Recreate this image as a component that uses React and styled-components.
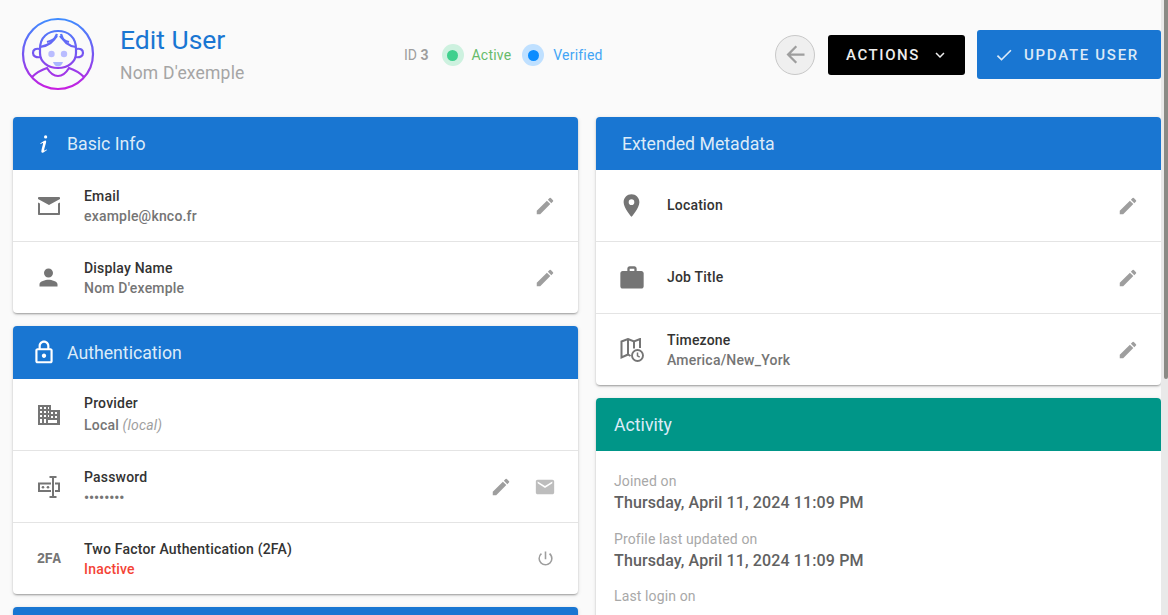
import React from "react";
import styled, { createGlobalStyle } from "styled-components";
import { MdEdit, MdEmail, MdPerson, MdPlace, MdWork, MdPowerSettingsNew, MdCheck, MdKeyboardArrowDown, MdArrowBack, MdOutlineLock } from "react-icons/md";

const Global = createGlobalStyle`
  html, body { overflow: hidden; background: #fafafa; }
  body { margin: 0; font-family: Roboto, "Liberation Sans", sans-serif; color: #333; }
`;
const Page = styled.div`height: 615px; overflow: hidden; padding: 0 0 0 13px;`;
const ScrollTrack = styled.div`position: fixed; top: 0; right: 0; bottom: 0; width: 7px; background: #e9e9e9;`;
const ScrollThumb = styled.div`position: absolute; top: 0; right: 0; width: 4px; height: 379px; background: #8a8a85; border-radius: 0 0 2px 2px;`;
const Header = styled.header`height: 117px; display: flex; align-items: flex-start; box-sizing: border-box;`;
const Identity = styled.div`display: flex; align-items: center; gap: 25px; margin: 17px 0 0 8px; width: 383px; flex: none;`;
const Titles = styled.div`display: flex; flex-direction: column; gap: 8px;`;
const Title = styled.h1`margin: 0; font-size: 26.5px; line-height: 30px; font-weight: 400; color: #1976d2;`;
const Subtitle = styled.div`font-size: 17.5px; line-height: 20px; letter-spacing: .2px; color: #a5a5a5;`;
const Statuses = styled.div`display: flex; align-items: center; margin: 44px 0 0 0; height: 22px; width: 371px; flex: none;`;
const IdText = styled.span`font-size: 14px; color: #9e9e9e; margin-right: 13px; b { font-weight: 700; }`;
const Dot = styled.span`width: 22px; height: 22px; border-radius: 50%; background: ${p => p.$ring}; display: flex; align-items: center; justify-content: center; margin-right: ${p => p.$gap || 8}px;
  &::after { content: ""; width: 11px; height: 11px; border-radius: 50%; background: ${p => p.$core}; }`;
const StatusText = styled.span`font-size: 14px; letter-spacing: .2px; color: ${p => p.$color}; margin-right: ${p => p.$gap || 0}px;`;
const Actions = styled.div`display: flex; align-items: center; margin-top: 30px; height: 49px;`;
const BackButton = styled.div`width: 40px; height: 40px; margin-right: 13px; box-sizing: border-box; border: 1.5px solid #c8c8c8; border-radius: 50%; background: #efefef; color: #9e9e9e; display: flex; align-items: center; justify-content: center; font-size: 27px;`;
const ActionsButton = styled.div`width: 137px; height: 40px; margin-right: 12px; border-radius: 3px; background: #000; color: #eee; display: flex; align-items: center; justify-content: center; gap: 11px; padding-left: 2px; box-sizing: border-box; font-size: 15px; font-weight: 500; letter-spacing: 1.6px; svg { font-size: 18px; }`;
const UpdateButton = styled.div`width: 184px; height: 49px; padding-right: 5px; box-sizing: border-box; border-radius: 3px; background: #1976d2; color: #dbe9f7; display: flex; align-items: center; justify-content: center; gap: 10px; font-size: 15px; font-weight: 500; letter-spacing: 1.7px; svg { font-size: 20px; }`;
const Columns = styled.div`display: grid; grid-template-columns: 565px 565px; column-gap: 18px;`;
const Column = styled.div`display: flex; flex-direction: column; gap: 13px;`;
const Card = styled.section`background: #fff; border-radius: 4px; box-shadow: 0 2px 2px -1px rgba(0,0,0,.2), 0 1px 2px 0 rgba(0,0,0,.14), 0 1px 4px 0 rgba(0,0,0,.12);`;
const CardHead = styled.div`height: 53px; background: ${p => p.$bg || "#1976d2"}; border-radius: 4px 4px 0 0; color: #dcebf8; display: flex; align-items: center; font-size: 17.7px; padding-left: ${p => p.$pad || 18}px;`;
const HeadIcon = styled.span`width: 26px; margin-right: 10px; display: flex; align-items: center; justify-content: center; color: #fff; font-size: ${p => p.$size || 27}px;`;
const Row = styled.div`height: ${p => p.$h || 71}px; display: flex; align-items: center; border-top: ${p => p.$first ? "0" : "1px solid #e4e4e4"}; color: #757575;`;
const RowIcon = styled.div`width: 71px; flex: none; display: flex; justify-content: center; font-size: ${p => p.$size || 24}px; color: #757575;`;
const RowText = styled.div`flex: 1; display: flex; flex-direction: column; gap: ${p => p.$gap ?? 3}px; padding-top: ${p => p.$shift ? 2 : 0}px;`;
const Label = styled.div`font-size: 14px; line-height: 17px; font-weight: 500; letter-spacing: .2px; color: #333;`;
const Value = styled.div`font-size: 14px; line-height: 17px; font-weight: 500; letter-spacing: .2px; color: ${p => p.$color || "#757575"}; i { font-weight: 400; color: #9e9e9e; }`;
const Dots = styled.div`font-size: 14px; line-height: 17px; font-weight: 700; color: #757575; padding-top: 1px;`;
const RowActions = styled.div`display: flex; align-items: center; gap: 22px; margin-right: 22px; color: #9e9e9e; svg { font-size: 22px; }`;
const PowerBox = styled.span`width: 22px; display: flex; justify-content: center; svg { font-size: 19px; }`;
const Muted = styled.span`display: flex; color: #bdbdbd;`;
const TwoFa = styled.span`font-family: "Liberation Mono", monospace; font-weight: 700; font-size: 14px; letter-spacing: -0.6px; color: #757575; line-height: 24px; padding-top: 1px;`;
const ActivityBody = styled.div`padding: 22px 18px 100px; display: flex; flex-direction: column; gap: 18.5px;`;
const Stat = styled.div`display: flex; flex-direction: column; gap: 3px;`;
const StatLabel = styled.div`font-size: 14px; line-height: 17px; letter-spacing: .13px; color: #a8a8a8;`;
const StatValue = styled.div`font-size: 16px; line-height: 19px; font-weight: 500; letter-spacing: .125px; color: #616161;`;

const Svg = ({ d }) => <svg width="1em" height="1em" viewBox="0 0 24 24" fill="currentColor"><path d={d} /></svg>;

const Avatar = () => (
  <svg width="74" height="74" viewBox="0 0 74 74" fill="none">
    <defs>
      <linearGradient id="av" gradientUnits="userSpaceOnUse" x1="0" y1="2" x2="0" y2="72">
        <stop offset="0" stopColor="#3f8cff" /><stop offset=".55" stopColor="#7a50f0" /><stop offset="1" stopColor="#c81ee0" />
      </linearGradient>
    </defs>
    <g fill="none" stroke="url(#av)" strokeWidth="2.2">
      <circle cx="37" cy="37" r="35" />
      <path d="M19 32c0-12 8-18 18-18s18 6 18 18v4c0 9-8 15-18 15s-18-6-18-15v-4Z" />
      <path d="M19 30c7-1 14-5 17-13M55 30c-7-1-13-5-15-13" />
      <path d="M26 25c4-1 8-3 10-6M48 25c-4-1-7-3-9-6" />
      <path d="M19 32c-5-1-7 1-7 4s3 5 8 4M55 32c5-1 7 1 7 4s-3 5-8 4" />
      <path d="M11 60c4-4 9-7 15-9 3 5 7 8 11 8s8-3 11-8c6 2 11 5 15 9" />
    </g>
    <circle cx="30.5" cy="37" r="3.2" fill="#b9bcff" /><circle cx="43" cy="37" r="3.2" fill="#b9bcff" />
    <path d="M32 45h10c-1 3-3 4.500-5 4.500s-4-1.500-5-4.500Z" fill="#a9b6ff" />
  </svg>
);

const InfoIcon = () => <Svg d="M13.5 4A1.5 1.5 0 0 0 12 5.5 1.5 1.5 0 0 0 13.5 7 1.5 1.5 0 0 0 15 5.5 1.5 1.5 0 0 0 13.5 4m-.36 4.77c-1.19.1-4.44 2.69-4.44 2.69-.2.15-.14.14.02.42.16.27.14.29.33.16.2-.13.53-.34 1.08-.68 2.12-1.36.34 1.78-.57 7.07-.36 2.62 2 1.27 2.61.87.6-.39 2.21-1.5 2.37-1.61.22-.15.06-.27-.11-.52-.12-.17-.24-.05-.24-.05-.65.43-1.84 1.33-2 .76-.19-.57 1.03-4.48 1.7-7.17.11-.64.41-2.04-.75-1.94Z" />;
const MailOpenIcon = () => <Svg d="M2 3h20c.5 0 1 .5 1 1v1l-11 6L1 5V4c0-.5.5-1 1-1Zm-1 5.500 2 1V19h18V9.500l2-1V20c0 .6-.4 1-1 1H2c-.6 0-1-.4-1-1V8.500Z" />;
const BuildingIcon = () => <Svg d="M1 2h13v5h9v15H1V2Zm2 2v2h2V4H3Zm4 0v2h2V4H7Zm4 0v2h1V4h-1ZM3 8v2h2V8H3Zm4 0v2h2V8H7Zm4 0v2h1V8h-1Zm3 1v2h2V9h-2Zm4 0v2h2V9h-2ZM3 12v2h2v-2H3Zm4 0v2h2v-2H7Zm4 0v2h1v-2h-1Zm3 1v2h2v-2h-2Zm4 0v2h2v-2h-2ZM3 16v4h2v-4H3Zm4 0v4h2v-4H7Zm4 1v3h9v-3h-9Z" />;
const PasswordIcon = () => (
  <svg width="1em" height="1em" viewBox="0 0 24 24" fill="none" stroke="currentColor" strokeWidth="2">
    <path d="M14 8.500H2v7.500h12M18 8.500h4v7.500h-4M12.500 2h7M16 2v20M12.500 22h7" />
    <circle cx="6" cy="12.200" r="1.300" fill="currentColor" stroke="none" /><circle cx="11" cy="12.200" r="1.300" fill="currentColor" stroke="none" />
  </svg>
);
const MapClockIcon = () => (
  <svg width="1em" height="1em" viewBox="0 0 24 24" fill="none" stroke="currentColor" strokeWidth="2">
    <path d="M10.500 18 8 16.500 1.500 19.500V3.500L8 1l6 2.500L20 1v9" /><path d="M8 1v15.500M14 3.500v7" />
    <circle cx="17.500" cy="17.500" r="5.500" strokeWidth="1.900" /><path d="M17.500 14.500v3.400l2.200 1.300" strokeWidth="1.500" />
  </svg>
);

const RowItem = ({ icon, iconSize, label, value, h, first, gap, actions, shift }) => (
  <Row $h={h} $first={first}>
    <RowIcon $size={iconSize}>{icon}</RowIcon>
    <RowText $gap={gap} $shift={shift}>
      <Label>{label}</Label>
      {value}
    </RowText>
    {actions}
  </Row>
);
const Edit = () => <RowActions><MdEdit /></RowActions>;

export default function App() {
  return (
    <Page>
      <Global />
      <Header>
        <Identity>
          <Avatar />
          <Titles>
            <Title>Edit User</Title>
            <Subtitle>Nom D'exemple</Subtitle>
          </Titles>
        </Identity>
        <Statuses>
          <IdText>ID <b>3</b></IdText>
          <Dot $ring="#cdf1df" $core="#3fd08d" />
          <StatusText $color="#66bb6a" $gap={11}>Active</StatusText>
          <Dot $ring="#bfe0ff" $core="#0a8cff" $gap={9} />
          <StatusText $color="#42a5f5">Verified</StatusText>
        </Statuses>
        <Actions>
          <BackButton><MdArrowBack /></BackButton>
          <ActionsButton>ACTIONS <MdKeyboardArrowDown /></ActionsButton>
          <UpdateButton><MdCheck /> UPDATE USER</UpdateButton>
        </Actions>
      </Header>
      <Columns>
        <Column>
          <Card>
            <CardHead><HeadIcon $size={28}><InfoIcon /></HeadIcon>Basic Info</CardHead>
            <RowItem first shift icon={<MailOpenIcon />} label="Email" value={<Value>example@knco.fr</Value>} actions={<Edit />} />
            <RowItem shift iconSize={27} icon={<MdPerson />} label="Display Name" value={<Value>Nom D'exemple</Value>} actions={<Edit />} />
          </Card>
          <Card>
            <CardHead><HeadIcon><MdOutlineLock /></HeadIcon>Authentication</CardHead>
            <RowItem first gap={5} icon={<BuildingIcon />} label="Provider" value={<Value>Local <i>(local)</i></Value>} />
            <RowItem shift icon={<PasswordIcon />} label="Password" value={<Dots>••••••••</Dots>} actions={<RowActions><MdEdit /><Muted><MdEmail /></Muted></RowActions>} />
            <RowItem shift icon={<TwoFa>2FA</TwoFa>} label="Two Factor Authentication (2FA)" value={<Value $color="#f44336">Inactive</Value>} actions={<RowActions><PowerBox><MdPowerSettingsNew /></PowerBox></RowActions>} />
          </Card>
          <Card><CardHead /></Card>
        </Column>
        <Column>
          <Card>
            <CardHead $pad={26}>Extended Metadata</CardHead>
            <RowItem first iconSize={27} icon={<MdPlace />} label="Location" actions={<Edit />} />
            <RowItem iconSize={28} icon={<MdWork />} label="Job Title" actions={<Edit />} />
            <RowItem shift icon={<MapClockIcon />} label="Timezone" value={<Value>America/New_York</Value>} actions={<Edit />} />
          </Card>
          <Card>
            <CardHead $bg="#009688">Activity</CardHead>
            <ActivityBody>
              <Stat><StatLabel>Joined on</StatLabel><StatValue>Thursday, April 11, 2024 11:09 PM</StatValue></Stat>
              <Stat><StatLabel>Profile last updated on</StatLabel><StatValue>Thursday, April 11, 2024 11:09 PM</StatValue></Stat>
              <Stat><StatLabel>Last login on</StatLabel></Stat>
            </ActivityBody>
          </Card>
        </Column>
      </Columns>
      <ScrollTrack><ScrollThumb /></ScrollTrack>
    </Page>
  );
}
